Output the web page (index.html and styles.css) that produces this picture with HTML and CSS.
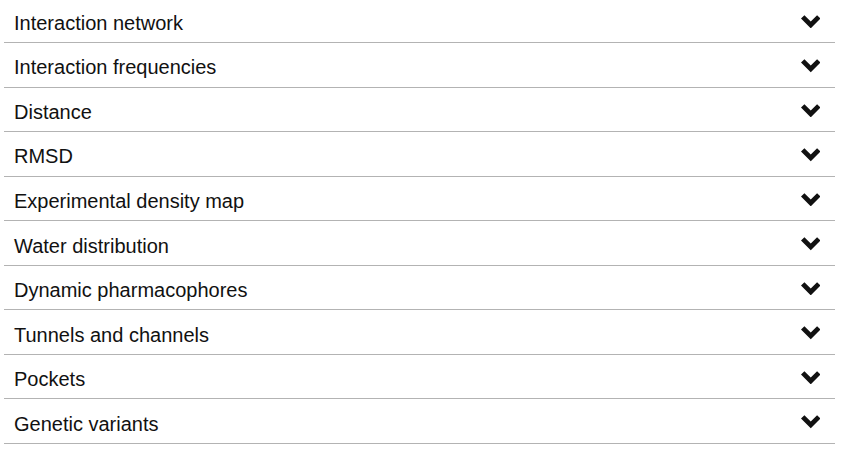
FILE: index.html
```html
<!DOCTYPE html>
<html>
<head>
<meta charset="utf-8">
<link rel="stylesheet" href="styles.css">
</head>
<body>
<div class="list">
  <div class="row"><span class="label">Interaction network</span><svg class="chev" viewBox="0 0 20 13.5"><path d="M0 3.5L3.5 0L10 6.5L16.5 0L20 3.5L10 13.5Z"/></svg></div>
  <div class="row"><span class="label">Interaction frequencies</span><svg class="chev" viewBox="0 0 20 13.5"><path d="M0 3.5L3.5 0L10 6.5L16.5 0L20 3.5L10 13.5Z"/></svg></div>
  <div class="row"><span class="label">Distance</span><svg class="chev" viewBox="0 0 20 13.5"><path d="M0 3.5L3.5 0L10 6.5L16.5 0L20 3.5L10 13.5Z"/></svg></div>
  <div class="row"><span class="label">RMSD</span><svg class="chev" viewBox="0 0 20 13.5"><path d="M0 3.5L3.5 0L10 6.5L16.5 0L20 3.5L10 13.5Z"/></svg></div>
  <div class="row"><span class="label">Experimental density map</span><svg class="chev" viewBox="0 0 20 13.5"><path d="M0 3.5L3.5 0L10 6.5L16.5 0L20 3.5L10 13.5Z"/></svg></div>
  <div class="row"><span class="label">Water distribution</span><svg class="chev" viewBox="0 0 20 13.5"><path d="M0 3.5L3.5 0L10 6.5L16.5 0L20 3.5L10 13.5Z"/></svg></div>
  <div class="row"><span class="label">Dynamic pharmacophores</span><svg class="chev" viewBox="0 0 20 13.5"><path d="M0 3.5L3.5 0L10 6.5L16.5 0L20 3.5L10 13.5Z"/></svg></div>
  <div class="row"><span class="label">Tunnels and channels</span><svg class="chev" viewBox="0 0 20 13.5"><path d="M0 3.5L3.5 0L10 6.5L16.5 0L20 3.5L10 13.5Z"/></svg></div>
  <div class="row"><span class="label">Pockets</span><svg class="chev" viewBox="0 0 20 13.5"><path d="M0 3.5L3.5 0L10 6.5L16.5 0L20 3.5L10 13.5Z"/></svg></div>
  <div class="row"><span class="label">Genetic variants</span><svg class="chev" viewBox="0 0 20 13.5"><path d="M0 3.5L3.5 0L10 6.5L16.5 0L20 3.5L10 13.5Z"/></svg></div>
</div>
</body>
</html>
```

FILE: styles.css
```css
html, body {
  margin: 0;
  padding: 0;
  background: #ffffff;
}

body {
  font-family: "Liberation Sans", Arial, sans-serif;
  color: #111111;
}

.list {
  width: 831px;
  margin: -1.5px 0 0 4px;
  display: flex;
  flex-direction: column;
}

.row {
  height: 43.56px;
  border-bottom: 1px solid #b3b3b3;
  display: flex;
  align-items: center;
  justify-content: space-between;
  padding: 0 15px 0 10px;
}

.label {
  font-size: 20px;
  line-height: 23px;
  padding-top: 6px;
}

.chev {
  width: 19.5px;
  height: 13.5px;
  fill: #111111;
  margin-top: 2px;
}
```
